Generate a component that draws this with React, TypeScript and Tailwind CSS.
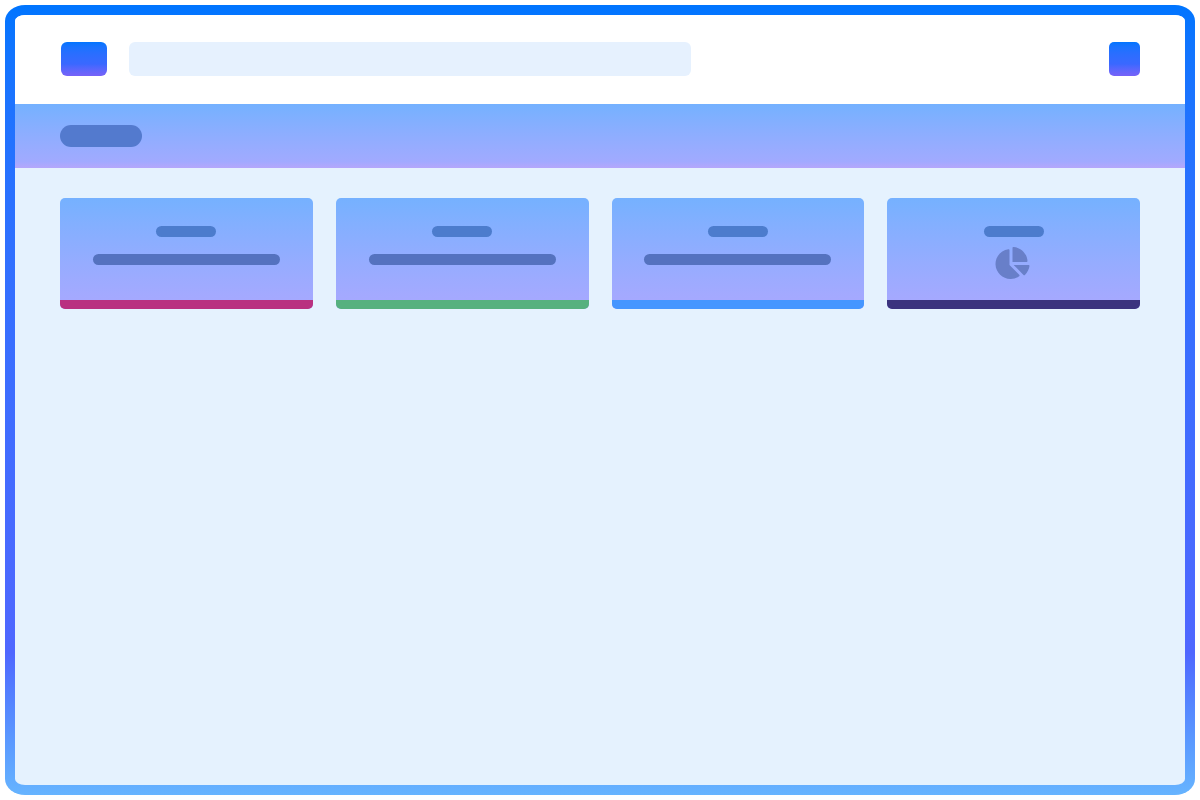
import React, { useState } from 'react';
import { FaChartPie } from 'react-icons/fa';

type Card = {
  id: number;
  stripe: string;
  chart?: boolean;
};

const cards: Card[] = [
  { id: 1, stripe: 'bg-[#b93180]' },
  { id: 2, stripe: 'bg-[#56b17f]' },
  { id: 3, stripe: 'bg-[#4596ff]' },
  { id: 4, stripe: 'bg-[#3b337e]', chart: true },
];

const Header = () => {
  const [search, setSearch] = useState('');

  return (
    <header className="flex h-[89px] items-center bg-white px-[45px] pb-px">
      <a
        href="#"
        aria-label="Home"
        className="ml-px h-[34px] w-[46px] shrink-0 rounded-md bg-linear-to-b from-[#0075ff] via-[#3a68ff] via-65% to-[#7662f8]"
      />
      <input
        type="search"
        aria-label="Search"
        value={search}
        onChange={(e) => setSearch(e.target.value)}
        className="ml-[22px] h-[34px] w-[52%] rounded-md bg-[#e6f1fe] px-3 text-sm outline-none"
      />
      <button
        type="button"
        aria-label="Account"
        className="ml-auto h-[34px] w-[31px] shrink-0 rounded-[5px] bg-linear-to-b from-[#0075ff] via-[#3a68ff] via-65% to-[#7662f8]"
      />
    </header>
  );
};

const SummaryCard = ({ card }: { card: Card }) => (
  <article className="flex h-[111px] flex-col overflow-hidden rounded-[5px] bg-linear-to-b from-[#75b1ff] to-[#a9a8ff]">
    <div className="flex flex-1 flex-col items-center pt-7">
      <div className="h-[11px] w-[60px] rounded-full bg-[#4c7ccd]" />
      {card.chart ? (
        <FaChartPie className="mt-[10px] mr-0.5 h-8 w-[35px] text-[#687fc9]" />
      ) : (
        <div className="mt-[17px] h-[11px] w-[74%] rounded-full bg-[#5472bf]" />
      )}
    </div>
    <div className={`h-[9px] ${card.stripe}`} />
  </article>
);

const App = () => {
  return (
    <div className="flex min-h-screen bg-white p-[5px]">
      <div className="flex flex-1 rounded-[20px/16px] bg-linear-to-b from-[#0075ff] via-[#4f67ff] via-82% to-[#66b4ff] p-[10px]">
        <div className="flex flex-1 flex-col overflow-hidden rounded-[10px/6px] bg-[#e5f2fe]">
          <Header />
          <div className="flex h-16 items-center bg-linear-to-b from-[#74b1ff] via-[#a1aaff] via-90% to-[#b5a7fb] px-[45px]">
            <div className="h-[22px] w-[82px] rounded-full bg-[#537ace]" />
          </div>
          <main className="grid grid-cols-4 gap-[23px] px-[45px] py-[30px]">
            {cards.map((card) => (
              <SummaryCard key={card.id} card={card} />
            ))}
          </main>
        </div>
      </div>
    </div>
  );
};

export default App;
